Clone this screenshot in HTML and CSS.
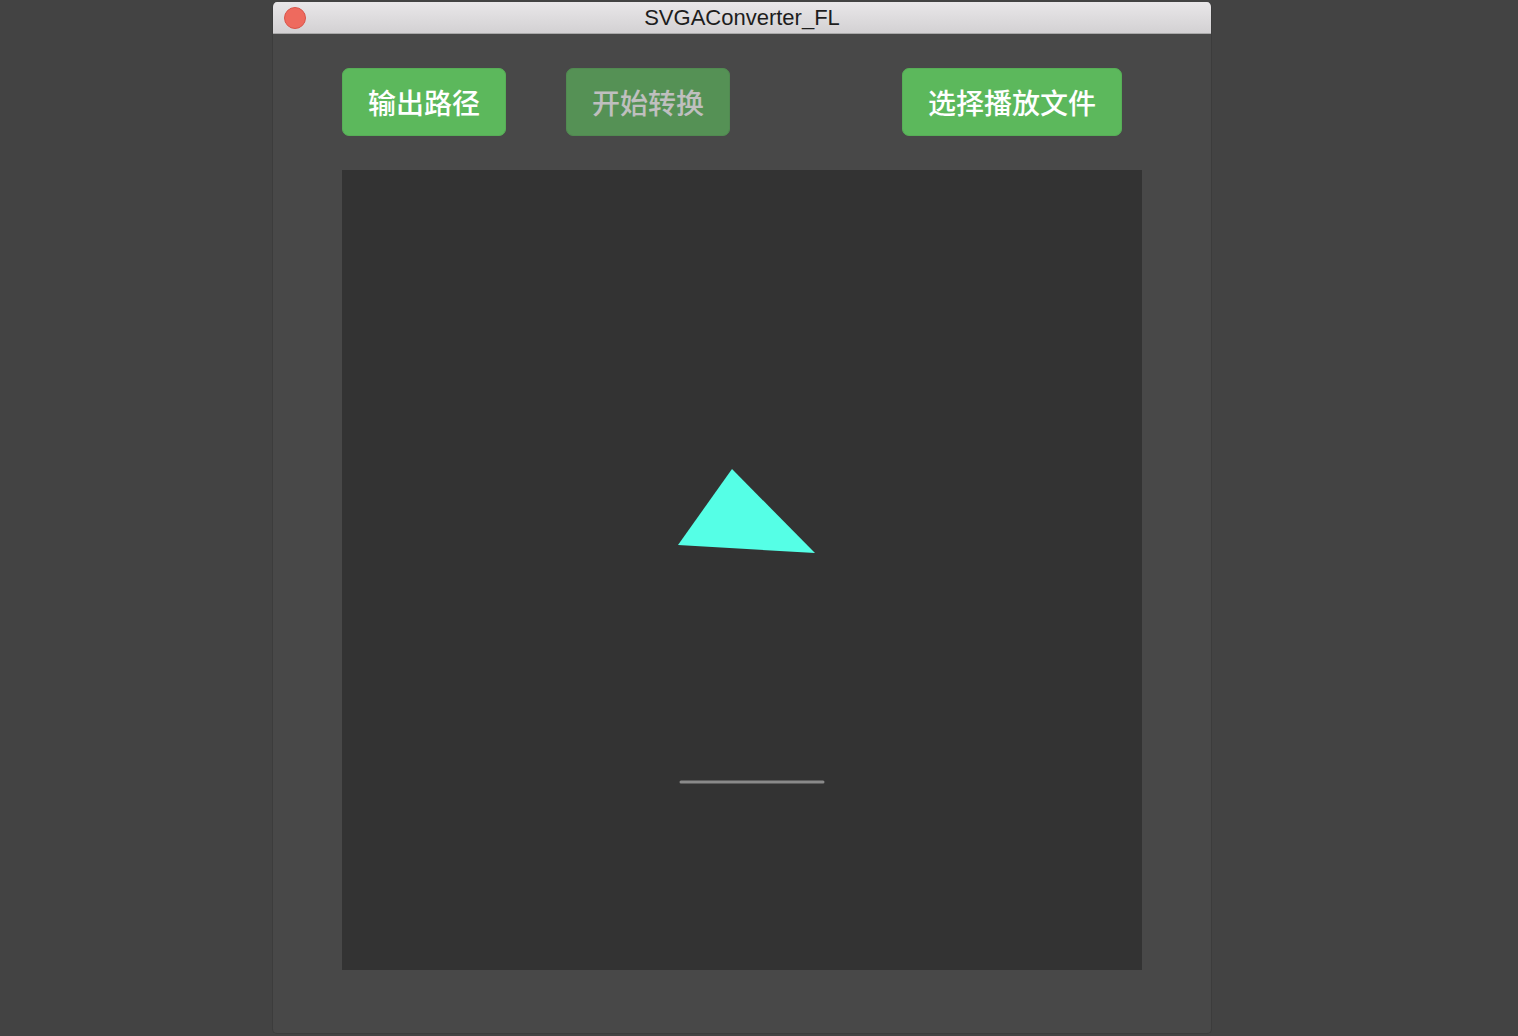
FILE: index.html
```html
<!DOCTYPE html>
<html lang="zh">
<head>
<meta charset="utf-8">
<title>SVGAConverter_FL</title>
<link rel="stylesheet" href="styles.css">
</head>
<body>
<div class="window">
  <div class="titlebar">
    <span class="close"></span>
    <span class="title">SVGAConverter_FL</span>
  </div>
  <div class="content">
    <div class="toolbar">
      <button class="btn btn-out">输出路径</button>
      <button class="btn btn-start" disabled>开始转换</button>
      <button class="btn btn-play">选择播放文件</button>
    </div>
    <div class="stage">
      <svg class="stage-art" width="800" height="800" viewBox="0 0 800 800">
        <polygon points="390,299 336,375 473,383" fill="#55ffe6"/>
        <line x1="339" y1="612" x2="481" y2="612" stroke="#8a8a8a" stroke-width="3" stroke-linecap="round"/>
      </svg>
    </div>
  </div>
</div>
</body>
</html>
```

FILE: styles.css
```css
html, body {
  margin: 0;
  padding: 0;
}
body {
  background: #434343;
  width: 1518px;
  height: 1036px;
  overflow: hidden;
  font-family: "Liberation Sans", "Noto Sans CJK SC", sans-serif;
}
.window {
  margin: 2px 0 0 272px;
  width: 940px;
  height: 1032px;
  box-sizing: border-box;
  background: #484848;
  border: 1px solid #3c3c3c;
  border-top: none;
  border-radius: 5px;
  overflow: hidden;
  display: flex;
  flex-direction: column;
}
.titlebar {
  height: 31px;
  flex: none;
  background: linear-gradient(#e9e7e9, #d3d1d3);
  border-bottom: 1px solid #a9a9a9;
  display: flex;
  align-items: center;
  position: relative;
}
.close {
  width: 22px;
  height: 22px;
  border-radius: 50%;
  background: #ee6a5e;
  box-sizing: border-box;
  border: 1px solid #d9544a;
  margin-left: 11px;
  flex: none;
}
.title {
  position: absolute;
  left: 0;
  right: 0;
  text-align: center;
  font-size: 22px;
  color: #1d1d1d;
  line-height: 31px;
  top: 0;
}
.content {
  padding: 34px 0 0 69px;
  display: flex;
  flex-direction: column;
}
.toolbar {
  display: flex;
  height: 68px;
}
.btn {
  -webkit-appearance: none;
  appearance: none;
  height: 68px;
  border: 1px solid #57ae57;
  border-radius: 7px;
  background: #5cb85c;
  color: #ffffff;
  font-family: "Noto Sans CJK SC", sans-serif;
  font-size: 28px;
  font-weight: 500;
  padding: 0;
  line-height: 64px;
}
.btn-out {
  width: 164px;
}
.btn-start {
  width: 164px;
  margin-left: 60px;
  opacity: 0.65;
}
.btn-play {
  width: 220px;
  margin-left: 172px;
}
.stage {
  margin-top: 34px;
  width: 800px;
  height: 800px;
  background: #333333;
}
.stage-art {
  display: block;
}
```
